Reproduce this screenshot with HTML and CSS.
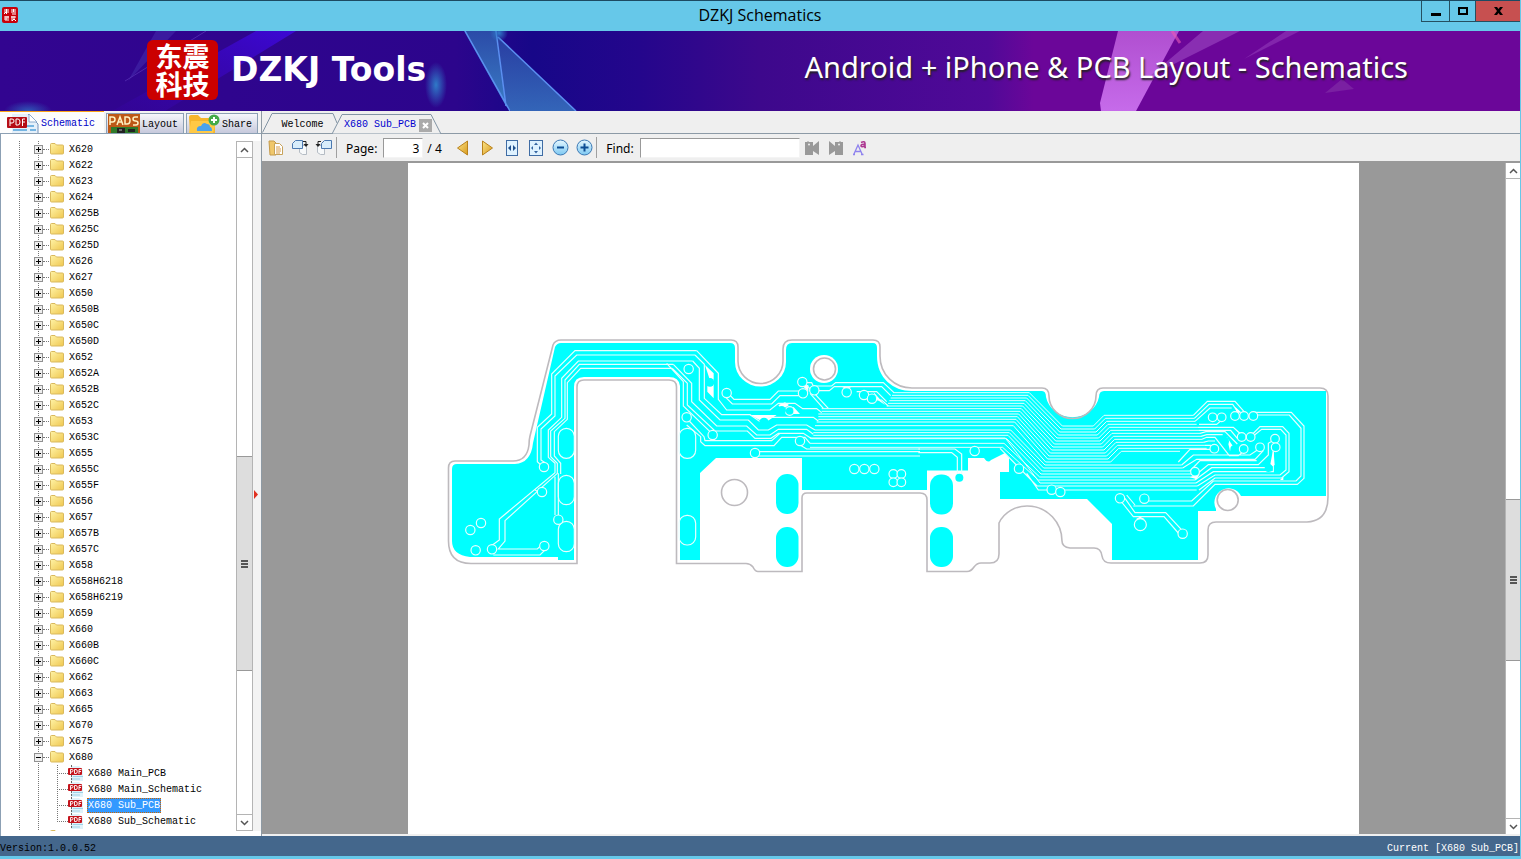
FILE: index.html
```html
<!DOCTYPE html>
<html lang="en">
<head>
<meta charset="utf-8">
<title>DZKJ Schematics</title>
<link rel="stylesheet" href="styles.css">
</head>
<body>
<svg class="defs" aria-hidden="true">
  <defs>
    <linearGradient id="gold" x1="0" y1="0" x2="1" y2="1"><stop offset="0" stop-color="#fff3a6"/><stop offset="1" stop-color="#efc750"/></linearGradient>
    <linearGradient id="amber" x1="0" y1="0" x2="1" y2="1"><stop offset="0" stop-color="#fbe58a"/><stop offset="1" stop-color="#d99a1c"/></linearGradient>
    <linearGradient id="sky" x1="0" y1="0" x2="0" y2="1"><stop offset="0" stop-color="#e6f7ff"/><stop offset="1" stop-color="#7cc8f2"/></linearGradient>
    <symbol id="folder" viewBox="0 0 14 14"><path d="M.5 2.500q0-1 1-1h3.500l1.500 1.500h6q1 0 1 1v7q0 1-1 1h-11q-1 0-1-1z" fill="url(#gold)" stroke="#d9b95e"/></symbol>
    <symbol id="pdf" viewBox="0 0 16 16"><path d="M3 1h8l4 4v11H3z" fill="#dff2fa"/><path d="M3 14h9M5 11.500h10" stroke="#9fd3e8"/><path d="M3.500 0v3M3.500 10v6" stroke="#666" stroke-dasharray="2 1"/><rect y="3" width="14" height="7" rx="1" fill="#c4141c"/><path d="M2.500 9V4.500H4q1 0 1 1T4 7H2.500M6.500 4.500v4H8q1.300 0 1.300-2T8 4.500zM11 9V4.500h2.500M11 6.500h2" fill="none" stroke="#fff" stroke-width=".9"/></symbol>
  </defs>
</svg>

<header class="titlebar">
  <svg class="appicon" viewBox="0 0 16 16" aria-hidden="true"><rect width="16" height="16" rx="2" fill="#c8000a"/><path d="M2 3h5M4.500 2v5M2 5h5M2 7l2-2M9 3h5M9 5h5M10 7h4M11.500 2v3M2 10h5M4 9v5M2 12h3M6 9v5M9 10h5M10 9v5M12 9v3l-2 2M12 12l2 2" stroke="#fff" fill="none"/></svg>
  <h1 class="title">DZKJ Schematics</h1>
  <div class="winbtns">
    <button class="win min" aria-label="Minimize"><svg width="12" height="10"><path d="M1 7h10v3H1z"/></svg></button>
    <button class="win max" aria-label="Maximize"><svg width="10" height="8"><path d="M0 0h10v8H0zM2 2v4h6V2z" fill-rule="evenodd"/></svg></button>
    <button class="win close" aria-label="Close"><svg width="9" height="8"><path d="M0 0h3l1.500 2L6 0h3L6 4l3 4H6L4.500 6 3 8H0l3-4z"/></svg></button>
  </div>
</header>

<section class="banner">
  <svg class="bannerart" viewBox="0 0 1520 80" preserveAspectRatio="none" aria-hidden="true">
    <defs>
      <linearGradient id="bg"><stop offset="0" stop-color="#320590"/><stop offset=".3" stop-color="#2c058c"/><stop offset=".35" stop-color="#170788"/><stop offset=".42" stop-color="#24068c"/><stop offset=".5" stop-color="#3d088c"/><stop offset=".65" stop-color="#500998"/><stop offset=".68" stop-color="#6b0699"/><stop offset="1" stop-color="#6b0699"/></linearGradient>
      <linearGradient id="glow" x1="0" y1="0" x2="0" y2="1"><stop offset="0" stop-color="#b04fd0"/><stop offset="1" stop-color="#c66bea"/></linearGradient>
      <linearGradient id="teal" x1="0" y1="0" x2="0" y2="1"><stop offset="0" stop-color="#2b4ba8"/><stop offset="1" stop-color="#3a7cc4"/></linearGradient>
      <linearGradient id="beam" x1="1" y1="0" x2="0" y2="1"><stop offset="0" stop-color="#3c08d4"/><stop offset="1" stop-color="#340498" stop-opacity=".6"/></linearGradient>
      <radialGradient id="spark"><stop offset="0" stop-color="#2f7ac8"/><stop offset="1" stop-color="#2f7ac8" stop-opacity="0"/></radialGradient>
    </defs>
    <rect width="1520" height="80" fill="url(#bg)"/>
    <path d="M256 0H296L165 80H112z" fill="url(#beam)"/>
    <path d="M156 0h20L128 50z" fill="#4a35b4" opacity=".45"/><path d="M206 0 125 50" stroke="#5c35b8" opacity=".7"/>
    <ellipse cx="28" cy="80" rx="24" ry="10" fill="url(#spark)" opacity=".7"/>
    <ellipse cx="436" cy="54" rx="11" ry="23" fill="url(#spark)"/>
    <path d="M464 0H496L506 75z" fill="url(#teal)"/><path d="M497 5 576 80H511L506 75z" fill="url(#teal)" opacity=".8"/>
    <path d="M465 0 510 80M496 0 506 75M498 6 576 80" fill="none" stroke="#5b8ff0" stroke-width="1.500"/>
    <circle cx="499" cy="2" r="9" fill="url(#spark)"/>
    <path d="M1118 0h61l-43 80h-35l-1-8z" fill="url(#glow)"/>
    <path d="M1203 0h37l-72 36-24 14z" fill="#9a43c0" opacity=".65"/><path d="M1286 0h14l-56 28z" fill="#9a43c0" opacity=".5"/>
    <path d="m1342 48 12 10-29 4z" fill="#8432a8" opacity=".6"/>
    <path d="m1172 0 8 12" stroke="#e85ab8" stroke-width="3" opacity=".6"/>
  </svg>
  <div class="brand"><span class="logo">东震<br>科技</span><strong>DZKJ Tools</strong></div>
  <p class="slogan">Android + iPhone &amp; PCB Layout - Schematics</p>
</section>

<main class="main">
  <aside class="side">
    <nav class="sidetabs">
      <button class="stab on"><svg width="32" height="20" viewBox="0 0 32 20" aria-hidden="true"><path d="M5 1h17l9 9v10H5z" fill="#e5f0fa"/><path d="m21 1 10 10v9" fill="none" stroke="#7290b8"/><path d="M22 1v8h8z" fill="#fff" stroke="#8eabcc"/><path d="M6 17h14M18 13h9M23 17h6" stroke="#76b5e2" stroke-width="2"/><rect x="0" y="4" width="20" height="11" rx="1" fill="#b60d16"/><path d="M3 13V6h2q2 0 2 2T5 10H3M9 6v6h2q2 0 2-3t-2-3zM15.500 13V6H18M15 9h3" fill="none" stroke="#fff"/></svg><span>Schematic</span></button>
      <button class="stab"><svg width="32" height="19" viewBox="0 0 32 19" aria-hidden="true"><rect width="32" height="19" fill="#bd5817"/><path d="M2 11V3h2.500q2.500 0 2.500 2.500T4.500 8H2M9 11l3-8 3 8m-5-3h4M17 3v7h2q3 0 3-3.500T19 3zM30 3h-3q-2 0-2 2t2.500 2 2.500 2-2 2h-3" fill="none" stroke="#fff2c4" stroke-width="1.500"/><path d="M3 13h27v6H3z" fill="#2f7a2a"/><path d="M9 14h8v5H9zM20 15h7v3h-7z" fill="#222"/><path d="M11 16h3" stroke="#bbb"/></svg><span>Layout</span></button>
      <button class="stab"><svg width="32" height="19" viewBox="0 0 32 19" aria-hidden="true"><path d="M1 3q0-2 2-2h7l3 3h14v15H2z" fill="#f6b62c"/><path d="M3 7h25l-3 12H1z" fill="#ffc945"/><path d="M9 17q-1-5 4-5 2-5 6-2 3 0 3 3 2 0 2 4z" fill="#4aa2ec"/><circle cx="26" cy="6" r="5.500" fill="#44ab48"/><path d="M26 3v6M23 6h6" stroke="#fff" stroke-width="2"/></svg><span>Share</span></button>
    </nav>
    <div class="treebox">
      <ul class="tree">
        <li><button class="tog" aria-label="Expand"></button><svg class="fold"><use href="#folder"/></svg>X620</li>
        <li><button class="tog" aria-label="Expand"></button><svg class="fold"><use href="#folder"/></svg>X622</li>
        <li><button class="tog" aria-label="Expand"></button><svg class="fold"><use href="#folder"/></svg>X623</li>
        <li><button class="tog" aria-label="Expand"></button><svg class="fold"><use href="#folder"/></svg>X624</li>
        <li><button class="tog" aria-label="Expand"></button><svg class="fold"><use href="#folder"/></svg>X625B</li>
        <li><button class="tog" aria-label="Expand"></button><svg class="fold"><use href="#folder"/></svg>X625C</li>
        <li><button class="tog" aria-label="Expand"></button><svg class="fold"><use href="#folder"/></svg>X625D</li>
        <li><button class="tog" aria-label="Expand"></button><svg class="fold"><use href="#folder"/></svg>X626</li>
        <li><button class="tog" aria-label="Expand"></button><svg class="fold"><use href="#folder"/></svg>X627</li>
        <li><button class="tog" aria-label="Expand"></button><svg class="fold"><use href="#folder"/></svg>X650</li>
        <li><button class="tog" aria-label="Expand"></button><svg class="fold"><use href="#folder"/></svg>X650B</li>
        <li><button class="tog" aria-label="Expand"></button><svg class="fold"><use href="#folder"/></svg>X650C</li>
        <li><button class="tog" aria-label="Expand"></button><svg class="fold"><use href="#folder"/></svg>X650D</li>
        <li><button class="tog" aria-label="Expand"></button><svg class="fold"><use href="#folder"/></svg>X652</li>
        <li><button class="tog" aria-label="Expand"></button><svg class="fold"><use href="#folder"/></svg>X652A</li>
        <li><button class="tog" aria-label="Expand"></button><svg class="fold"><use href="#folder"/></svg>X652B</li>
        <li><button class="tog" aria-label="Expand"></button><svg class="fold"><use href="#folder"/></svg>X652C</li>
        <li><button class="tog" aria-label="Expand"></button><svg class="fold"><use href="#folder"/></svg>X653</li>
        <li><button class="tog" aria-label="Expand"></button><svg class="fold"><use href="#folder"/></svg>X653C</li>
        <li><button class="tog" aria-label="Expand"></button><svg class="fold"><use href="#folder"/></svg>X655</li>
        <li><button class="tog" aria-label="Expand"></button><svg class="fold"><use href="#folder"/></svg>X655C</li>
        <li><button class="tog" aria-label="Expand"></button><svg class="fold"><use href="#folder"/></svg>X655F</li>
        <li><button class="tog" aria-label="Expand"></button><svg class="fold"><use href="#folder"/></svg>X656</li>
        <li><button class="tog" aria-label="Expand"></button><svg class="fold"><use href="#folder"/></svg>X657</li>
        <li><button class="tog" aria-label="Expand"></button><svg class="fold"><use href="#folder"/></svg>X657B</li>
        <li><button class="tog" aria-label="Expand"></button><svg class="fold"><use href="#folder"/></svg>X657C</li>
        <li><button class="tog" aria-label="Expand"></button><svg class="fold"><use href="#folder"/></svg>X658</li>
        <li><button class="tog" aria-label="Expand"></button><svg class="fold"><use href="#folder"/></svg>X658H6218</li>
        <li><button class="tog" aria-label="Expand"></button><svg class="fold"><use href="#folder"/></svg>X658H6219</li>
        <li><button class="tog" aria-label="Expand"></button><svg class="fold"><use href="#folder"/></svg>X659</li>
        <li><button class="tog" aria-label="Expand"></button><svg class="fold"><use href="#folder"/></svg>X660</li>
        <li><button class="tog" aria-label="Expand"></button><svg class="fold"><use href="#folder"/></svg>X660B</li>
        <li><button class="tog" aria-label="Expand"></button><svg class="fold"><use href="#folder"/></svg>X660C</li>
        <li><button class="tog" aria-label="Expand"></button><svg class="fold"><use href="#folder"/></svg>X662</li>
        <li><button class="tog" aria-label="Expand"></button><svg class="fold"><use href="#folder"/></svg>X663</li>
        <li><button class="tog" aria-label="Expand"></button><svg class="fold"><use href="#folder"/></svg>X665</li>
        <li><button class="tog" aria-label="Expand"></button><svg class="fold"><use href="#folder"/></svg>X670</li>
        <li><button class="tog" aria-label="Expand"></button><svg class="fold"><use href="#folder"/></svg>X675</li>
        <li><button class="tog open" aria-label="Collapse"></button><svg class="fold"><use href="#folder"/></svg>X680</li>
        <li class="kid"><svg class="doc"><use href="#pdf"/></svg><span>X680 Main_PCB</span></li>
        <li class="kid"><svg class="doc"><use href="#pdf"/></svg><span>X680 Main_Schematic</span></li>
        <li class="kid"><svg class="doc"><use href="#pdf"/></svg><span class="sel">X680 Sub_PCB</span></li>
        <li class="kid last"><svg class="doc"><use href="#pdf"/></svg><span>X680 Sub_Schematic</span></li>
        <li><svg class="fold lone"><use href="#folder"/></svg></li>
      </ul>
      <div class="sbar">
        <button class="sarrow" aria-label="Scroll up"><svg width="9" height="6"><path d="m1 5 3.500-3.500L8 5"/></svg></button>
        <div class="before"></div>
        <div class="thumb"><i></i></div>
        <div class="after"></div>
        <button class="sarrow down" aria-label="Scroll down"><svg width="9" height="6"><path d="m1 1 3.500 3.500L8 1"/></svg></button>
      </div>
      <div class="splitter"><svg width="4" height="9"><path d="M0 0 4 4.500 0 9z" fill="#e03020"/></svg></div>
    </div>
  </aside>

  <section class="work">
    <nav class="doctabs">
      <button class="dtab welcome"><svg width="76" height="20" aria-hidden="true"><path d="M.5 19.500 10 .5H71L75 10" /></svg>Welcome</button>
      <div class="dtab active"><svg width="110" height="20" aria-hidden="true"><path d="M0 20 10 .5H99L109 20z"/></svg><button class="dname">X680 Sub_PCB</button><button class="dclose" aria-label="Close tab"><svg width="7" height="7"><path d="m1 1 5 5M6 1 1 6" stroke="#fff" stroke-width="2"/></svg></button></div>
    </nav>
    <div class="toolbar">
      <button class="tb" aria-label="Bookmarks"><svg width="16" height="16"><path d="M1 1h5l2 2v12H2z" fill="#f0c76a" stroke="#c59a4a"/><path d="M6.500 3.500h5l3 3v8h-8z" fill="#fff" stroke="#c7a25a"/><path d="M8 7h4M8 9h5M8 11h5M8 13h4" stroke="#d79b48"/></svg></button>
      <button class="tb" aria-label="Rotate right"><svg width="18" height="17"><path d="M8.500 6.500h7v9h-4l-3-2z" fill="#f7f9fa" stroke="#b5bcc4"/><path d="M4.500 1.500h7v8h-10v-5z" fill="#d8edfb" stroke="#4c79b0"/><path d="M12 2.500h3v3" fill="none" stroke="#222"/><path d="M12.500 5h5l-2.500 3z" fill="#222"/></svg></button>
      <button class="tb" aria-label="Rotate left"><svg width="18" height="17"><path d="M2.500 6.500h7v9h-4l-3-2z" fill="#f7f9fa" stroke="#b5bcc4"/><path d="M9.500 1.500h7v8h-10v-5z" fill="#d8edfb" stroke="#4c79b0"/><path d="M6 2.500H3v3" fill="none" stroke="#222"/><path d="M.5 5h5L3 8z" fill="#222"/></svg></button>
      <span class="sep"></span>
      <label class="lbl" for="page">Page:</label><input id="page" class="field page" value="3"><span class="total">/ 4</span>
      <button class="tb nav" aria-label="Previous page"><svg width="13" height="16"><path d="M11.500 1v14L1.500 8z" fill="url(#amber)" stroke="#b9821c"/></svg></button>
      <button class="tb nav" aria-label="Next page"><svg width="13" height="16"><path d="M1.500 1v14l10-7z" fill="url(#amber)" stroke="#b9821c"/></svg></button>
      <button class="tb" aria-label="Fit width"><svg width="14" height="16"><rect x="1.500" y=".5" width="11" height="15" fill="#dff2ff" stroke="#3f6ca4"/><path d="M6 5v6L3 8zM8 5v6l3-3z" fill="#1f4f8c"/></svg></button>
      <button class="tb" aria-label="Fit page"><svg width="14" height="16"><rect x=".5" y=".5" width="13" height="15" fill="#dff2ff" stroke="#3f6ca4"/><path d="M5 5 7 2.500 9 5zM5 11l2 2.500L9 11zM4 6v4L2 8zM10 6v4l2-2z" fill="#3565a0"/></svg></button>
      <button class="tb" aria-label="Zoom out"><svg width="17" height="17"><circle cx="8.500" cy="8.500" r="7.500" fill="url(#sky)" stroke="#3b78b4"/><path d="M5 8.500h7" stroke="#0d4d94" stroke-width="2"/></svg></button>
      <button class="tb" aria-label="Zoom in"><svg width="17" height="17"><circle cx="8.500" cy="8.500" r="7.500" fill="url(#sky)" stroke="#3b78b4"/><path d="M4.500 8.500h8M8.500 4.500v8" stroke="#0d4d94" stroke-width="2"/></svg></button>
      <span class="sep"></span>
      <label class="lbl" for="find">Find:</label><input id="find" class="field find">
      <button class="tb" aria-label="Find previous"><svg width="16" height="16"><path d="M1 2h2l1-1 1 1h4v4l6-5v14l-6-4v4H1z" fill="#999"/><circle cx="5" cy="4.500" r="1" fill="#eee"/></svg></button>
      <button class="tb" aria-label="Find next"><svg width="16" height="16"><path d="M15 2h-2l-1-1-1 1H7v4L1 1v14l6-4v4h8z" fill="#999"/><circle cx="11" cy="4.500" r="1" fill="#eee"/></svg></button>
      <button class="tb" aria-label="Match case"><svg width="16" height="16"><path d="M1.500 15 6 5l4.500 10M1 14.500h2M9 14.500h2.500M3 11.500h6" fill="none" stroke="#8e82ee" stroke-width="1.300"/><path d="M9 2.500q4-2 4 1v4h1M13 4.500q-4-.5-4 1.300t4 .2" fill="none" stroke="#ad3791" stroke-width="1.600"/></svg></button>
    </div>
    <div class="viewer">
      <div class="canvas">
        <svg class="page-view" viewBox="1224 489 2853 2013" role="img" aria-label="X680 sub board copper layer">
          <g transform="scale(3)">
            <path d="M452 469Q452 464 457 464H515Q531 463 533 443L555 347Q557 343 561 343H730Q735 343 735 348V362A25.500 24.500 0 0 0 786 362V350Q786 343 792 343H873Q877 343 877 348V356C877 378 893 391 912 391H1042Q1046 391 1046 397A27 25 0 0 0 1099 397Q1099 391 1104 391H1326V496H1241A14 14 0 1 0 1216 509V511H1198V560H1112V524L1087 499H1000V472H1009V458L1005 453 991 460Q988 464 984 458L968 458V470.500H927V490H802V458H716L700 473V560H680V386Q679 377 669 377H584Q574 377 574 387V560H558V557H470Q452 555 452 541Z" fill="#0ff"/>
            <circle cx="824" cy="369" r="14" fill="#fff"/>
            <g fill="#0ff"><rect x="776" y="474" width="22.500" height="40" rx="11"/><rect x="776" y="527" width="22.500" height="40" rx="11"/><rect x="930" y="474.500" width="23" height="40" rx="11"/><rect x="930" y="527" width="23" height="40" rx="11"/></g>
            <g fill="none" stroke="#bdbabe" stroke-width="1.600">
              <path d="M448.500 468Q448.500 461 455 461H513Q527 461 529 445Q529 440 530 436L553 345Q555 340 561 340H731Q738 340 738 347V361A22.500 22.500 0 0 0 783 361V349Q783 340 792 340H873Q880 340 880 347V356C880 375 895 388 912 388H1042Q1049 388 1049 396A23.500 22.500 0 0 0 1096 396Q1096 388 1103 388H1320Q1328 388 1328 396V497Q1328 521 1307 522H1216Q1208 522 1208 530V555Q1208 563 1200 563H1111Q1103 563 1102 556Q1101 548 1094 548H1070Q1062 547 1062 541C1062 523 1048 506 1027 506C1016 506 1004 512 999 523V554Q999 563 990 563H981Q977 563 974 567Q971 571.500 967 571.500H927V500Q927 493 920 493H807Q802 493 802 498V571.500H758Q755 571.500 753 567Q750 563.500 746 563.500H676.500V387Q676.500 380 669 380H584Q577 380 577 387V563.500H471Q448.500 563.500 448.500 541Z"/>
              <circle cx="824.500" cy="369" r="11"/><circle cx="734.500" cy="492.500" r="13"/><circle cx="1227.700" cy="500" r="10.500"/>
            </g>
          </g>
          <g fill="none" stroke="#e9ffff" stroke-width="3.500">
            <g transform="translate(1320 990)">
              <path d="M770 62H405L335 132V252L292 292V395L310 412M765 75H410L345 138V258L303 297V390L325 405M758 93H415L365 145V262L325 300V382L345 400V428L178 567V630L150 650M700 103H418L375 150V265L332 303V380L352 400V430L195 572V633L175 657H292L305 645M697 115H422L382 158V268L343 305V378L362 400V432M345 440V555M355 430V555M160 675H300L320 655M285 480 305 490"/>
              <rect x="355" y="295" width="48" height="90" rx="24"/><rect x="355" y="436" width="48" height="88" rx="24"/><rect x="355" y="574" width="48" height="91" rx="24"/>
              <g fill="#0ff"><circle cx="312" cy="411" r="14"/><circle cx="306" cy="486" r="14"/><circle cx="123" cy="579" r="14"/><circle cx="91" cy="600" r="14"/><circle cx="107" cy="661" r="14"/><circle cx="156" cy="658" r="14"/><circle cx="313" cy="648" r="14"/><circle cx="355" cy="569" r="14"/></g>
            </g>
            <g transform="translate(2010 990)">
              <g fill="#fff" stroke="none"><path d="M105 105 131 130V205L112 185V170L118 145zM240 255H320L285 278zM325 225 345 217 357 225 335 240zM370 230 390 252H362zM395 165 415 165V185zM515 170H545L530 178zM610 185 645 225 620 208z"/></g>
              <path d="M80 62 145 130V208L170 240H300L325 220H375L398 236H440L455 248M75 75 103 103V205L155 254H240L270 275L300 262H430L445 273M68 93 88 115V210L150 270H235L265 300H295L320 285H410L435 300M10 103 65 160V215L140 288H230L260 315H300L325 298H410L430 313M7 115 52 160V225L135 303H232L255 325H303L325 310H400L425 326M-10 100 40 155V228L120 305M55 270 102 320 105 332H305L330 310M50 285 92 320V335L105 347H312L335 322H405L420 340M175 190 192 208H300L325 183H395M165 200 187 222H305L330 197H390M405 160 475 235M420 190 460 235M435 182H478L493 170H635L662 197M405 158H425L430 168H485L497 158H640L672 188M560 185H620L650 215M600 210H635L655 228M265 365H750M255 378H750M390 345 410 357H750"/>
              <rect x="27" y="295" width="50" height="90" rx="24"/><rect x="27" y="556" width="50" height="89" rx="24"/>
              <g fill="#0ff"><circle cx="56" cy="117" r="14"/><circle cx="50" cy="262" r="14"/><circle cx="128" cy="315" r="14"/><circle cx="170" cy="189" r="14"/><circle cx="397" cy="156" r="14"/><circle cx="399" cy="190" r="14"/><circle cx="433" cy="181" r="14"/><circle cx="530" cy="187" r="14"/><circle cx="582" cy="195" r="14"/><circle cx="606" cy="206" r="14"/><circle cx="359" cy="243" r="13"/><circle cx="390" cy="333" r="14"/><circle cx="255" cy="369" r="14"/><circle cx="553" cy="417" r="14"/><circle cx="583" cy="417" r="14"/><circle cx="613" cy="417" r="14"/><circle cx="670" cy="432" r="13"/><circle cx="694" cy="432" r="13"/><circle cx="670" cy="457" r="13"/><circle cx="694" cy="457" r="13"/></g>
              <g fill="#0ff" stroke="none"><circle cx="120" cy="157" r="13"/><circle cx="282" cy="277" r="14"/><circle cx="335" cy="241" r="13"/></g>
            </g>
            <g transform="translate(2700 1140)">
              <g stroke-width="3">
                <path d="M-20 38H388L487 138H580L612 106H880M-24 46H384L483 147H584L616 115H883M-28 54H380L479 156H588L620 124H885M-32 62H376L475 165H592L624 133H890M-36 70H372L471 174H596L628 142H894M-40 78H368L467 183H600L632 151H897"/>
                <path d="M-235 86H364L463 192H604L636 160H900M-235 94H360L459 201H608L640 169H903M-245 102H356L455 210H612L644 178H906M-245 110H352L451 219H616L648 187H910M-245 118H348L447 228H620L652 196H915M-250 126H344L443 237H624L656 205H920"/>
                <path d="M-255 137H340L437 246H632L664 214H840M-255 150H332L435 255H845M-260 158H328L431 264H848M-260 166H324L427 273H870M-265 176H320L423 282H875M-270 190H312L419 291H880M-270 202H308L415 300H885M-270 174 H316L420 309H888"/>
              </g>
              <path d="M300 205 411 318H892M380 280 415 330H890"/>
              <path d="M55 207H165L185 222V285M55 218H155L172 232V285"/>
              <g fill="#0ff"><circle cx="224" cy="213" r="14"/><circle cx="357" cy="266" r="14"/><circle cx="455" cy="329" r="14"/><circle cx="481" cy="336" r="14"/></g><circle cx="178" cy="293" r="12" fill="#0ff" stroke="none"/>
            </g>
            <g transform="translate(3300 1140)">
              <path d="M280 106 322 64H405L435 98M283 115 327 73H398L415 98M285 124 330 84H395M297 133H350L365 120M294 142H400L425 165M297 151H392L412 175M300 160 318 155H375L412 192M303 169 320 164H368M306 178 320 172H345L388 227H415L432 213M310 187 325 183H345M315 196H333M235 246 270 208H330M245 255 280 225H450L480 205M248 264 290 238H465L490 212M270 273 300 242H470M280 291 325 254H475L505 225V190L525 178M285 300 335 263H495M288 309 340 275H520V210M292 318 345 285H540L558 270V165L542 148H485L460 168M297 330 345 294H545L567 275V160L548 140H480L455 165M130 363H275L340 303H588L603 288V145L568 105H465M100 378H280L345 313H592L612 295V138L574 97H465M80 345 105 375M60 360 100 410H192L240 465M75 355 105 398H197L250 455"/>
              <path d="m520 205 4 50-15 8zM270 292 300 280 290 298zM380 170 400 200 390 213zM405 80 425 98H410zM120 410 135 418H107zM540 300 550 290V300z" fill="#fff" stroke="none"/>
              <g fill="#0ff"><circle cx="338" cy="112" r="13"/><circle cx="365" cy="112" r="13"/><circle cx="405" cy="108" r="13"/><circle cx="432" cy="108" r="13"/><circle cx="460" cy="108" r="13"/><circle cx="425" cy="171" r="13"/><circle cx="452" cy="171" r="13"/><circle cx="525" cy="176" r="13"/><circle cx="527" cy="202" r="13"/><circle cx="480" cy="202" r="13"/><circle cx="431" cy="207" r="13"/><circle cx="343" cy="206" r="13"/><circle cx="285" cy="275" r="13"/><circle cx="60" cy="355" r="14"/><circle cx="133" cy="356" r="14"/><circle cx="121" cy="434" r="18"/><circle cx="248" cy="461" r="14"/></g>
              <g fill="#0ff" stroke="none"><circle cx="375" cy="184" r="12"/><circle cx="403" cy="208" r="12"/><circle cx="506" cy="264" r="12"/></g>
            </g>
          </g>
        </svg>
      </div>
      <div class="sbar right">
        <button class="sarrow" aria-label="Scroll up"><svg width="9" height="6"><path d="m1 5 3.500-3.500L8 5"/></svg></button>
        <div class="before"></div>
        <div class="thumb"><i></i></div>
        <div class="after"></div>
        <button class="sarrow down" aria-label="Scroll down"><svg width="9" height="6"><path d="m1 1 3.500 3.500L8 1"/></svg></button>
      </div>
    </div>
  </section>
</main>

<footer class="status"><span>Version:1.0.0.52</span><span class="current">Current [X680 Sub_PCB]</span></footer>
</body>
</html>
```

FILE: styles.css
```css
* { box-sizing: border-box; }
body {
  margin: 0;
  height: 100vh;
  display: flex;
  flex-direction: column;
  overflow: hidden;
  background: #efefef;
  border-right: 1px solid #66c8e9;
  border-bottom: 3px solid #66c8e9;
  font: 10px/16px "Liberation Mono", monospace;
  color: #000;
}
button { font: inherit; color: inherit; background: none; border: 0; padding: 0; margin: 0; }
svg { display: block; flex: none; }
.defs { position: absolute; width: 0; height: 0; }

.titlebar {
  flex: none;
  display: grid;
  grid-template-columns: 1fr auto 1fr;
  height: 31px;
  background: #66c8e9;
  border-top: 1px solid #1c4a62;
}
.appicon { width: 16px; height: 16px; margin: 6px 2px; }
.title { margin: 0; font: 16px/28px "Open Sans", sans-serif; }
.winbtns { justify-self: end; display: flex; height: 21px; }
.win { display: grid; place-items: center; border: solid #254f60; border-width: 0 0 1px 1px; }
.min { width: 28px; }
.max { width: 26px; }
.close { width: 45px; background: #c75050; }

.banner {
  position: relative;
  flex: none;
  height: 80px;
  display: flex;
  justify-content: space-between;
  align-items: center;
  padding: 0 112px 2px 147px;
  color: #fff;
}
.bannerart { position: absolute; inset: 0; width: 100%; height: 100%; }
.brand { position: relative; display: flex; align-items: center; gap: 13px; }
.logo {
  width: 71px;
  height: 60px;
  padding-top: 2px;
  border-radius: 6px;
  background: #cb0000;
  text-align: center;
  font: bold 27px/28px "Noto Sans CJK SC", sans-serif;
}
.brand strong { font: bold 33px/40px "DejaVu Sans", sans-serif; }
.slogan {
  position: relative;
  margin: 0 0 6px;
  font: 29px/36px "Noto Sans", sans-serif;
  text-shadow: 1px 2px 2px #222;
}

.main { flex: 1; min-height: 0; display: flex; }
.side { width: 262px; flex: none; display: flex; flex-direction: column; background: #f3f3f3; border-right: 1px solid #8e9aa4; }
.sidetabs { display: flex; gap: 2px; height: 23px; flex: none; align-items: flex-end; border-bottom: 1px solid #8ca0b4; }
.stab {
  display: flex;
  align-items: center;
  gap: 2px;
  height: 20px;
  padding: 0 5px 0 1px;
  border: 1px solid #8ca0b4;
  border-bottom: 0;
  background: linear-gradient(#f6f7fb, #c6c9dc);
}
.stab span { padding-top: 3px; }
.stab.on { width: 104px; height: 23px; padding-left: 7px; border-width: 2px 0 0; border-color: #fba31a; background: #fdfdfd; color: #0000c8; }

.treebox { flex: 1; min-height: 0; display: flex; padding: 7px 0 5px; border-left: 1px solid #8ca0b4; background: #fff; }
.tree {
  flex: 1;
  margin: 0;
  padding: 0 0 0 33px;
  overflow: hidden;
  list-style: none;
  line-height: 15px;
  background:
    repeating-linear-gradient(#777 0 1px, transparent 1px 2px) 18px 0 / 1px 100% no-repeat,
    repeating-linear-gradient(#777 0 1px, transparent 1px 2px) 37px 0 / 1px 100% no-repeat;
}
.tree li { display: flex; align-items: center; height: 16px; white-space: nowrap; }
.tog {
  width: 9px;
  height: 9px;
  border: 1px solid #919191;
  background:
    linear-gradient(#000, #000) center / 5px 1px no-repeat,
    linear-gradient(#000, #000) center / 1px 5px no-repeat,
    #eee;
}
.tog.open { background: linear-gradient(#000, #000) center / 5px 1px no-repeat, #eee; }
.tog::after { content: ""; display: block; width: 6px; margin-left: 8px; border-top: 1px dotted #777; }
.fold { width: 14px; height: 14px; margin: 0 5px 0 7px; }
.fold.lone { margin-left: 16px; align-self: flex-start; }
.kid { padding-left: 23px; background: repeating-linear-gradient(#777 0 1px, transparent 1px 2px) 23px 0 / 1px 100% no-repeat; }
.kid.last { background-size: 1px 8px; }
.kid::before { content: ""; width: 11px; border-top: 1px dotted #777; }
.doc { width: 16px; height: 16px; }
.kid span { margin-left: 3px; padding: 0 1px; }
.kid .sel { background: #3399ff; color: #fff; outline: 1px dotted #c60; outline-offset: -1px; }

.sbar { width: 17px; flex: none; display: flex; flex-direction: column; border: 1px solid #b4b4b4; background: #fff; }
.sarrow { height: 16px; display: grid; place-items: center; border-bottom: 1px solid #b4b4b4; }
.sarrow.down { border: 0; border-top: 1px solid #b4b4b4; }
.sarrow path { fill: none; stroke: #555; stroke-width: 1.5; }
.before { flex: 299; }
.thumb { flex: 214; display: grid; place-items: center; background: #ddd; border: solid #999; border-width: 1px 0; }
.thumb i { width: 7px; height: 8px; background: repeating-linear-gradient(#555 0 2px, transparent 2px 3px); }
.after { flex: 143; }
.splitter { width: 8px; flex: none; display: grid; align-items: center; padding: 17px 0 0 1px; background: #f3f3f3; }

.work { flex: 1; min-width: 0; display: flex; flex-direction: column; }
.doctabs { display: flex; align-items: flex-end; height: 23px; flex: none; border-bottom: 1px solid #8c9aa6; line-height: 20px; }
.dtab { position: relative; height: 20px; }
.dtab > svg { position: absolute; left: 0; top: 0; z-index: 0; }
.dtab path { fill: none; stroke: #8294a4; }
.welcome { width: 70px; padding: 2px 0 0 11px; }
.active { display: flex; align-items: center; width: 110px; padding: 2px 0 0 12px; margin-bottom: -1px; color: #0000d0; }
.active > svg path { fill: #efefef; }
.dname, .dclose { position: relative; }
.dclose { width: 13px; height: 13px; margin-left: 3px; display: grid; place-items: center; background: #aaa; }
.dclose svg path { stroke: #fff; }

.toolbar { display: flex; align-items: center; height: 29px; flex: none; padding-left: 2px; border-bottom: 2px solid #999; font: 12px/18px "Noto Sans", sans-serif; }
.tb { width: 24px; height: 24px; display: grid; place-items: center; }
.nav { width: 25px; }
.sep { width: 1px; height: 21px; background: #a0a0a0; }
.lbl { margin: 2px 6px 0 9px; }
.field { height: 20px; border: 1px solid #999; border-right-color: #f4f4f4; border-bottom-color: #f4f4f4; background: #fff; font: inherit; padding: 1px 3px 0; }
.page { width: 40px; text-align: right; }
.total { width: 27px; padding: 2px 0 0 4px; }
.find { width: 160px; }

.viewer { flex: 1; min-height: 0; display: flex; border-bottom: 2px solid #f0f0f0; }
.canvas { flex: 1; min-width: 0; padding: 0 146px; background: #999; }
.page-view { width: 100%; height: 100%; background: #fff; }
.right { width: 15px; border-width: 0 0 0 1px; }
.right .before { flex: 322; }
.right .thumb { flex: 161; }
.right .after { flex: 158; }

.status { flex: none; display: flex; justify-content: space-between; height: 20px; padding: 5px 1px 0 0; line-height: 16px; background: #44678c; }
.current { color: #fff; }
```
